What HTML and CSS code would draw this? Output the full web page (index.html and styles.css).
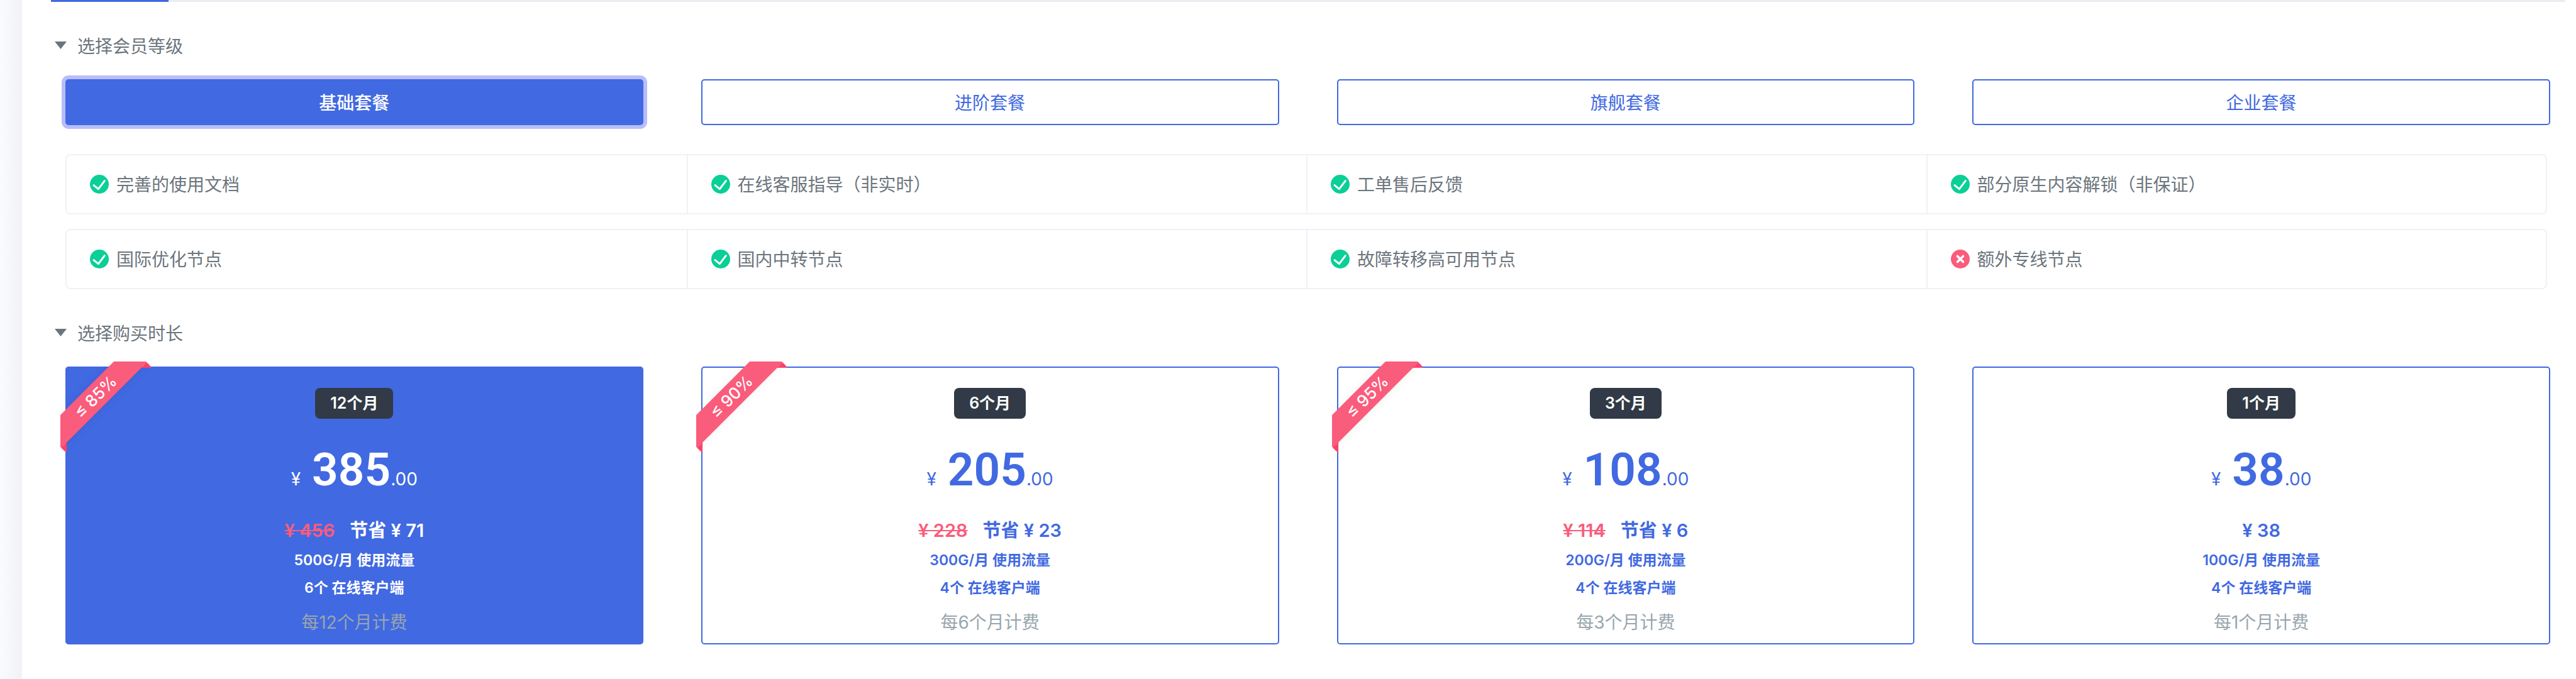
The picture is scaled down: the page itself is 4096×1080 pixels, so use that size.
FILE: index.html
```
<!DOCTYPE html>
<html lang="zh-CN">
<head>
    <meta charset="UTF-8">
    <meta name="viewport" content="width=device-width, initial-scale=1.0">
    <title>选择套餐</title>
    <link rel="stylesheet" href="styles.css">
</head>
<body>
    <!-- Shared icons -->
    <svg class="icon-defs" aria-hidden="true">
        <symbol id="icon-check" viewBox="0 0 30 30">
            <circle cx="15" cy="15" r="15" fill="#0acf97"/>
            <path d="M6 16.6 L13.4 22.6 L23.3 9.6" fill="none" stroke="#fff" stroke-width="3" stroke-linecap="round" stroke-linejoin="round"/>
        </symbol>
        <symbol id="icon-close" viewBox="0 0 30 30">
            <circle cx="15" cy="15" r="15" fill="#fa5c7c"/>
            <path d="M10.5 10.5 L19.5 19.5 M19.5 10.5 L10.5 19.5" fill="none" stroke="#fff" stroke-width="3.6" stroke-linecap="round"/>
        </symbol>
    </svg>

    <div class="page">
        <div class="side-edge"></div>

        <main class="content">
            <div class="tabs"><span class="tab-active"></span></div>

            <!-- Membership level -->
            <h2 class="section-title"><span class="caret"></span>选择会员等级</h2>
            <div class="plans">
                <button class="plan-btn active" type="button">基础套餐</button>
                <button class="plan-btn" type="button">进阶套餐</button>
                <button class="plan-btn" type="button">旗舰套餐</button>
                <button class="plan-btn" type="button">企业套餐</button>
            </div>

            <!-- Plan features -->
            <ul class="features">
                <li><svg class="icon"><use href="#icon-check"/></svg>完善的使用文档</li>
                <li><svg class="icon"><use href="#icon-check"/></svg>在线客服指导（非实时）</li>
                <li><svg class="icon"><use href="#icon-check"/></svg>工单售后反馈</li>
                <li><svg class="icon"><use href="#icon-check"/></svg>部分原生内容解锁（非保证）</li>
            </ul>
            <ul class="features">
                <li><svg class="icon"><use href="#icon-check"/></svg>国际优化节点</li>
                <li><svg class="icon"><use href="#icon-check"/></svg>国内中转节点</li>
                <li><svg class="icon"><use href="#icon-check"/></svg>故障转移高可用节点</li>
                <li><svg class="icon"><use href="#icon-close"/></svg>额外专线节点</li>
            </ul>

            <!-- Billing period -->
            <h2 class="section-title"><span class="caret"></span>选择购买时长</h2>
            <div class="periods">
                <button class="card active" type="button">
                    <span class="ribbon"><span>≤ 85%</span></span>
                    <span class="badge">12个月</span>
                    <span class="price">¥ <strong>385</strong>.00</span>
                    <span class="saving"><del>¥ 456</del><span>节省 ¥ 71</span></span>
                    <span class="spec">500G/月 使用流量</span>
                    <span class="spec">6个 在线客户端</span>
                    <span class="cycle">每12个月计费</span>
                </button>
                <button class="card" type="button">
                    <span class="ribbon"><span>≤ 90%</span></span>
                    <span class="badge">6个月</span>
                    <span class="price">¥ <strong>205</strong>.00</span>
                    <span class="saving"><del>¥ 228</del><span>节省 ¥ 23</span></span>
                    <span class="spec">300G/月 使用流量</span>
                    <span class="spec">4个 在线客户端</span>
                    <span class="cycle">每6个月计费</span>
                </button>
                <button class="card" type="button">
                    <span class="ribbon"><span>≤ 95%</span></span>
                    <span class="badge">3个月</span>
                    <span class="price">¥ <strong>108</strong>.00</span>
                    <span class="saving"><del>¥ 114</del><span>节省 ¥ 6</span></span>
                    <span class="spec">200G/月 使用流量</span>
                    <span class="spec">4个 在线客户端</span>
                    <span class="cycle">每3个月计费</span>
                </button>
                <button class="card" type="button">
                    <span class="badge">1个月</span>
                    <span class="price">¥ <strong>38</strong>.00</span>
                    <span class="saving"><span>¥ 38</span></span>
                    <span class="spec">100G/月 使用流量</span>
                    <span class="spec">4个 在线客户端</span>
                    <span class="cycle">每1个月计费</span>
                </button>
            </div>
        </main>
    </div>
</body>
</html>
```
FILE: styles.css
```
/* General Reset */
* {
    box-sizing: border-box;
    margin: 0;
    padding: 0;
}
body {
    background: #fff;
    color: #6c757d;
    font-family: Inter, "Noto Sans CJK SC", sans-serif;
    font-size: 28px;
    line-height: 42px;
}
button {
    font-family: inherit;
    font-size: inherit;
    line-height: inherit;
    cursor: pointer;
}
.icon-defs {
    display: none;
}

/* Page Layout */
.page {
    display: flex;
    min-height: 100vh;
}
.side-edge {
    flex: none;
    width: 35px;
    background: linear-gradient(to right, #fafbfe, #f1f2f7);
}
.content {
    flex: 1;
    padding: 0 41px 0 46px;
}
.tabs {
    height: 3px;
    margin-right: -24px;
    background: #e9edf1;
}
.tab-active {
    display: block;
    width: 187px;
    height: 3px;
    background: #4169e1;
}

/* Section Titles */
.section-title {
    display: flex;
    align-items: center;
    gap: 17px;
    margin-top: 50px;
    padding-left: 6px;
    font-size: 28px;
    font-weight: 400;
}
.caret {
    width: 19px;
    height: 12px;
    margin-bottom: 4px;
    background: #6c757d;
    clip-path: polygon(0 0, 100% 0, 50% 100%);
}

/* Plan Buttons */
.plans, .periods {
    display: grid;
    grid-template-columns: repeat(4, 1fr);
    gap: 92px;
    margin-top: 31px;
    margin-left: 23px;
}
.plans {
    margin-bottom: 46px;
}
.plan-btn {
    padding: 15px 24px 12px;
    background: #fff;
    border: 2px solid #4169e1;
    border-radius: 5px;
    color: #4169e1;
}
.plan-btn.active {
    background: #4169e1;
    color: #fff;
    font-weight: 500;
    box-shadow: 0 0 0 6px #b8bdfa;
}

/* Feature Rows */
.features {
    display: grid;
    grid-template-columns: repeat(4, 1fr);
    margin: 0 5px 23px 23px;
    border: 2px solid #eef2f7;
    border-radius: 8px;
    list-style: none;
}
.features li {
    display: flex;
    align-items: center;
    gap: 12px;
    padding: 26px 37px 24px;
}
.features li + li {
    border-left: 2px solid #eef2f7;
}
.icon {
    width: 30px;
    height: 30px;
    margin-bottom: 2px;
}

/* Period Cards */
.card {
    position: relative;
    display: flex;
    flex-direction: column;
    align-items: center;
    padding: 32px 24px 12px;
    background: #fff;
    border: 2px solid #4169e1;
    border-radius: 5px;
    color: #4169e1;
}
.card.active {
    background: #4169e1;
    color: #fff;
}
.badge {
    padding: 0 24px;
    background: #313a46;
    border-radius: 8px;
    color: #fff;
    font-size: 25px;
    font-weight: 600;
    line-height: 49px;
}
.price {
    margin-top: 33px;
    line-height: 96px;
}
.price strong {
    margin-left: 10px;
    font-family: Roboto, "Liberation Sans", sans-serif;
    font-size: 73px;
    font-weight: 600;
}
.saving {
    display: flex;
    gap: 24px;
    margin: 13px 0 4px;
    font-size: 29px;
    font-weight: 600;
}
.saving del {
    color: #fa5c7c;
}
.spec {
    font-size: 23px;
    font-weight: 600;
    line-height: 44px;
}
.cycle {
    margin-top: 12px;
    color: #98a6ad;
}

/* Corner Ribbon */
.ribbon {
    position: absolute;
    top: -10px;
    left: -10px;
    width: 144px;
    height: 144px;
    overflow: hidden;
}
.ribbon span {
    position: absolute;
    top: 37px;
    left: -40px;
    width: 192px;
    background: #fa5c7c;
    box-shadow: 0 0 16px rgba(0, 0, 0, 0.06), 0 2px 0 rgba(0, 0, 0, 0.02);
    color: #fff;
    font-size: 26px;
    font-weight: 500;
    line-height: 38px;
    text-align: center;
    transform: rotate(-45deg);
}
.ribbon span::before, .ribbon span::after {
    content: "";
    position: absolute;
    top: 100%;
    border: 6px solid transparent;
    border-top-color: #fa436a;
}
.ribbon span::before {
    left: 0;
    border-left-color: #fa436a;
}
.ribbon span::after {
    right: 0;
    border-right-color: #fa436a;
}
```
